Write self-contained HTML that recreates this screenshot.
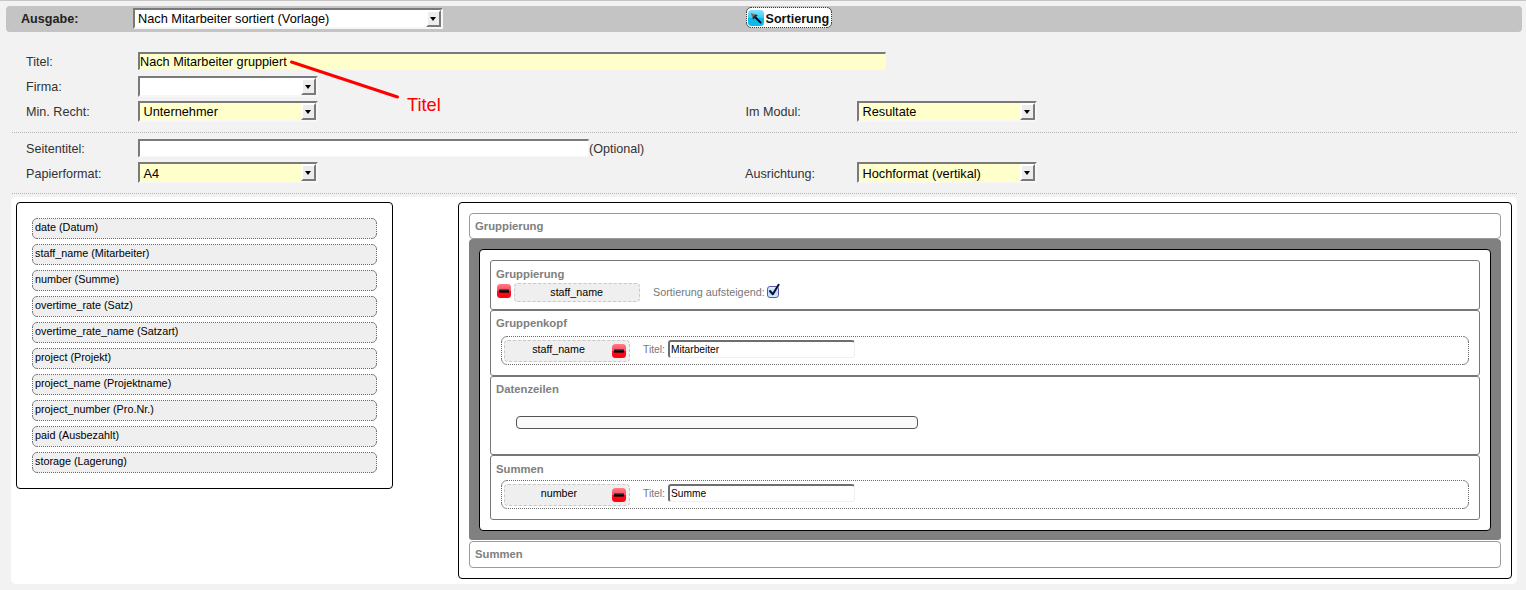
<!DOCTYPE html>
<html><head><meta charset="utf-8"><style>
html,body{margin:0;padding:0;width:1526px;height:590px;overflow:hidden;background:#f2f2f2;font-family:"Liberation Sans",sans-serif}
.a{position:absolute;box-sizing:content-box}
.t{position:absolute;line-height:1;white-space:nowrap}
.sel{border:2px solid;border-color:#7a7a7a #f7f7f7 #f7f7f7 #7a7a7a}
.inp{border-style:solid;border-width:2px 1px 1px 2px;border-color:#7a7a7a #f7f7f7 #f7f7f7 #7a7a7a}
.btn{background:#ededed;border:2px solid;border-color:#fff #7a7a7a #7a7a7a #fff}
.arr{width:0;height:0;border-left:3px solid transparent;border-right:3px solid transparent;border-top:4px solid #000}
</style></head><body>
<div class="a" style="left:0px;top:0px;width:1526px;height:1px;background:#c6c6c6"></div>
<div class="a" style="left:6px;top:6px;width:1516px;height:26px;background:#c4c4c4;border-radius:4px"></div>
<div class="t" style="left:21px;top:13.03px;font-size:12.6px;color:#222;font-weight:bold;">Ausgabe:</div>
<div class="a sel" style="left:133px;top:8px;width:306px;height:17px;background:#fff"></div>
<div class="a btn" style="left:426px;top:10px;width:11px;height:13px;"></div>
<div class="a arr" style="left:430px;top:17px;"></div>
<div class="t" style="left:138px;top:13.21px;font-size:12.75px;color:#000;">Nach Mitarbeiter sortiert (Vorlage)</div>
<svg class="a" style="left:746px;top:7px" width="86" height="21"><rect x="0.5" y="0.5" width="85" height="20" rx="4.5" fill="#fff"/><path d="M5.0 0.5H81.0M85.5 5.0V16.0M81.0 20.5H5.0M0.5 16.0V5.0" stroke="#3a3a3a" stroke-width="1" stroke-dasharray="1 1" fill="none"/><path d="M0.5 5.0A4.5 4.5 0 0 1 5.0 0.5M81.0 0.5A4.5 4.5 0 0 1 85.5 5.0M85.5 16.0A4.5 4.5 0 0 1 81.0 20.5M5.0 20.5A4.5 4.5 0 0 1 0.5 16.0" stroke="#555" stroke-width="1" fill="none"/></svg>
<svg class="a" style="left:748px;top:10px" width="16" height="16" viewBox="0 0 16 16">
<defs><linearGradient id="bl" x1="0" y1="0" x2="0" y2="1"><stop offset="0" stop-color="#86e3fb"/><stop offset="0.5" stop-color="#37c9f5"/><stop offset="0.52" stop-color="#08bbef"/><stop offset="1" stop-color="#11b9ea"/></linearGradient></defs>
<rect x="0" y="0" width="16" height="16" rx="3.5" fill="url(#bl)"/>
<path d="M12.6 12.6 L6.2 6.2" stroke="#000" stroke-width="1.9" stroke-linecap="round"/>
<path d="M2.7 2.9 L9.6 5.2 L5.2 9.6 Z" fill="#6e6e6e"/>
<path d="M4.5 7.8 L7.8 4.5 L9.6 5.2 L5.2 9.6 Z" fill="#222"/>
</svg>
<div class="t" style="left:765.5px;top:12.83px;font-size:12.6px;color:#111;font-weight:bold;">Sortierung</div>
<div class="t" style="left:26px;top:56.33px;font-size:12.6px;color:#333;">Titel:</div>
<div class="a inp" style="left:138px;top:52px;width:745px;height:15px;background:#ffffcc;"></div>
<div class="t" style="left:140px;top:55.75px;font-size:12.7px;color:#000;">Nach Mitarbeiter gruppiert</div>
<div class="t" style="left:26px;top:81.33px;font-size:12.6px;color:#333;">Firma:</div>
<div class="a sel" style="left:138px;top:76px;width:176px;height:17px;background:#fff"></div>
<div class="a btn" style="left:301px;top:78px;width:11px;height:13px;"></div>
<div class="a arr" style="left:305px;top:85px;"></div>
<div class="t" style="left:26px;top:105.83px;font-size:12.6px;color:#333;">Min. Recht:</div>
<div class="a sel" style="left:138px;top:101px;width:176px;height:17px;background:#ffffcc"></div>
<div class="a btn" style="left:301px;top:103px;width:11px;height:13px;"></div>
<div class="a arr" style="left:305px;top:110px;"></div>
<div class="t" style="left:143.5px;top:106.21px;font-size:12.75px;color:#000;">Unternehmer</div>
<div class="t" style="left:745.5px;top:106.33px;font-size:12.6px;color:#333;">Im Modul:</div>
<div class="a sel" style="left:857px;top:101px;width:176px;height:17px;background:#ffffcc"></div>
<div class="a btn" style="left:1020px;top:103px;width:11px;height:13px;"></div>
<div class="a arr" style="left:1024px;top:110px;"></div>
<div class="t" style="left:862.5px;top:106.21px;font-size:12.75px;color:#000;">Resultate</div>
<div class="a" style="left:12px;top:132px;width:1505px;height:1px;border-top:1px dotted #b5b5b5;height:0"></div>
<div class="t" style="left:26px;top:142.93px;font-size:12.6px;color:#333;">Seitentitel:</div>
<div class="a inp" style="left:138px;top:139px;width:448px;height:15px;background:#fff;"></div>
<div class="t" style="left:589px;top:142.93px;font-size:12.6px;color:#333;">(Optional)</div>
<div class="t" style="left:26px;top:168.03px;font-size:12.6px;color:#333;">Papierformat:</div>
<div class="a sel" style="left:138px;top:162px;width:176px;height:17px;background:#ffffcc"></div>
<div class="a btn" style="left:301px;top:164px;width:11px;height:13px;"></div>
<div class="a arr" style="left:305px;top:171px;"></div>
<div class="t" style="left:143.5px;top:167.71px;font-size:12.75px;color:#000;">A4</div>
<div class="t" style="left:745px;top:168.33px;font-size:12.6px;color:#333;">Ausrichtung:</div>
<div class="a sel" style="left:857px;top:162px;width:176px;height:17px;background:#ffffcc"></div>
<div class="a btn" style="left:1020px;top:164px;width:11px;height:13px;"></div>
<div class="a arr" style="left:1024px;top:171px;"></div>
<div class="t" style="left:862.5px;top:167.71px;font-size:12.75px;color:#000;">Hochformat (vertikal)</div>
<div class="a" style="left:12px;top:193px;width:1505px;height:1px;border-top:1px dotted #b5b5b5;height:0"></div>
<div class="a" style="left:11px;top:197px;width:1506px;height:387px;background:#fff;border-radius:5px"></div>
<div class="a" style="left:16px;top:202px;width:375px;height:285px;border:1px solid #000;border-radius:4px"></div>
<svg class="a" style="left:32px;top:218px" width="345" height="21"><rect x="0.5" y="0.5" width="344" height="20" rx="4.5" fill="#efefef"/><path d="M5.0 0.5H340.0M344.5 5.0V16.0M340.0 20.5H5.0M0.5 16.0V5.0" stroke="#6a6a6a" stroke-width="1" stroke-dasharray="1 1" fill="none"/><path d="M0.5 5.0A4.5 4.5 0 0 1 5.0 0.5M340.0 0.5A4.5 4.5 0 0 1 344.5 5.0M344.5 16.0A4.5 4.5 0 0 1 340.0 20.5M5.0 20.5A4.5 4.5 0 0 1 0.5 16.0" stroke="#888" stroke-width="1" fill="none"/></svg>
<div class="t" style="left:35px;top:222.36px;font-size:10.8px;color:#000;">date (Datum)</div>
<svg class="a" style="left:32px;top:244px" width="345" height="21"><rect x="0.5" y="0.5" width="344" height="20" rx="4.5" fill="#efefef"/><path d="M5.0 0.5H340.0M344.5 5.0V16.0M340.0 20.5H5.0M0.5 16.0V5.0" stroke="#6a6a6a" stroke-width="1" stroke-dasharray="1 1" fill="none"/><path d="M0.5 5.0A4.5 4.5 0 0 1 5.0 0.5M340.0 0.5A4.5 4.5 0 0 1 344.5 5.0M344.5 16.0A4.5 4.5 0 0 1 340.0 20.5M5.0 20.5A4.5 4.5 0 0 1 0.5 16.0" stroke="#888" stroke-width="1" fill="none"/></svg>
<div class="t" style="left:35px;top:248.36px;font-size:10.8px;color:#000;">staff_name (Mitarbeiter)</div>
<svg class="a" style="left:32px;top:270px" width="345" height="21"><rect x="0.5" y="0.5" width="344" height="20" rx="4.5" fill="#efefef"/><path d="M5.0 0.5H340.0M344.5 5.0V16.0M340.0 20.5H5.0M0.5 16.0V5.0" stroke="#6a6a6a" stroke-width="1" stroke-dasharray="1 1" fill="none"/><path d="M0.5 5.0A4.5 4.5 0 0 1 5.0 0.5M340.0 0.5A4.5 4.5 0 0 1 344.5 5.0M344.5 16.0A4.5 4.5 0 0 1 340.0 20.5M5.0 20.5A4.5 4.5 0 0 1 0.5 16.0" stroke="#888" stroke-width="1" fill="none"/></svg>
<div class="t" style="left:35px;top:274.36px;font-size:10.8px;color:#000;">number (Summe)</div>
<svg class="a" style="left:32px;top:296px" width="345" height="21"><rect x="0.5" y="0.5" width="344" height="20" rx="4.5" fill="#efefef"/><path d="M5.0 0.5H340.0M344.5 5.0V16.0M340.0 20.5H5.0M0.5 16.0V5.0" stroke="#6a6a6a" stroke-width="1" stroke-dasharray="1 1" fill="none"/><path d="M0.5 5.0A4.5 4.5 0 0 1 5.0 0.5M340.0 0.5A4.5 4.5 0 0 1 344.5 5.0M344.5 16.0A4.5 4.5 0 0 1 340.0 20.5M5.0 20.5A4.5 4.5 0 0 1 0.5 16.0" stroke="#888" stroke-width="1" fill="none"/></svg>
<div class="t" style="left:35px;top:300.36px;font-size:10.8px;color:#000;">overtime_rate (Satz)</div>
<svg class="a" style="left:32px;top:322px" width="345" height="21"><rect x="0.5" y="0.5" width="344" height="20" rx="4.5" fill="#efefef"/><path d="M5.0 0.5H340.0M344.5 5.0V16.0M340.0 20.5H5.0M0.5 16.0V5.0" stroke="#6a6a6a" stroke-width="1" stroke-dasharray="1 1" fill="none"/><path d="M0.5 5.0A4.5 4.5 0 0 1 5.0 0.5M340.0 0.5A4.5 4.5 0 0 1 344.5 5.0M344.5 16.0A4.5 4.5 0 0 1 340.0 20.5M5.0 20.5A4.5 4.5 0 0 1 0.5 16.0" stroke="#888" stroke-width="1" fill="none"/></svg>
<div class="t" style="left:35px;top:326.36px;font-size:10.8px;color:#000;">overtime_rate_name (Satzart)</div>
<svg class="a" style="left:32px;top:348px" width="345" height="21"><rect x="0.5" y="0.5" width="344" height="20" rx="4.5" fill="#efefef"/><path d="M5.0 0.5H340.0M344.5 5.0V16.0M340.0 20.5H5.0M0.5 16.0V5.0" stroke="#6a6a6a" stroke-width="1" stroke-dasharray="1 1" fill="none"/><path d="M0.5 5.0A4.5 4.5 0 0 1 5.0 0.5M340.0 0.5A4.5 4.5 0 0 1 344.5 5.0M344.5 16.0A4.5 4.5 0 0 1 340.0 20.5M5.0 20.5A4.5 4.5 0 0 1 0.5 16.0" stroke="#888" stroke-width="1" fill="none"/></svg>
<div class="t" style="left:35px;top:352.36px;font-size:10.8px;color:#000;">project (Projekt)</div>
<svg class="a" style="left:32px;top:374px" width="345" height="21"><rect x="0.5" y="0.5" width="344" height="20" rx="4.5" fill="#efefef"/><path d="M5.0 0.5H340.0M344.5 5.0V16.0M340.0 20.5H5.0M0.5 16.0V5.0" stroke="#6a6a6a" stroke-width="1" stroke-dasharray="1 1" fill="none"/><path d="M0.5 5.0A4.5 4.5 0 0 1 5.0 0.5M340.0 0.5A4.5 4.5 0 0 1 344.5 5.0M344.5 16.0A4.5 4.5 0 0 1 340.0 20.5M5.0 20.5A4.5 4.5 0 0 1 0.5 16.0" stroke="#888" stroke-width="1" fill="none"/></svg>
<div class="t" style="left:35px;top:378.36px;font-size:10.8px;color:#000;">project_name (Projektname)</div>
<svg class="a" style="left:32px;top:400px" width="345" height="21"><rect x="0.5" y="0.5" width="344" height="20" rx="4.5" fill="#efefef"/><path d="M5.0 0.5H340.0M344.5 5.0V16.0M340.0 20.5H5.0M0.5 16.0V5.0" stroke="#6a6a6a" stroke-width="1" stroke-dasharray="1 1" fill="none"/><path d="M0.5 5.0A4.5 4.5 0 0 1 5.0 0.5M340.0 0.5A4.5 4.5 0 0 1 344.5 5.0M344.5 16.0A4.5 4.5 0 0 1 340.0 20.5M5.0 20.5A4.5 4.5 0 0 1 0.5 16.0" stroke="#888" stroke-width="1" fill="none"/></svg>
<div class="t" style="left:35px;top:404.36px;font-size:10.8px;color:#000;">project_number (Pro.Nr.)</div>
<svg class="a" style="left:32px;top:426px" width="345" height="21"><rect x="0.5" y="0.5" width="344" height="20" rx="4.5" fill="#efefef"/><path d="M5.0 0.5H340.0M344.5 5.0V16.0M340.0 20.5H5.0M0.5 16.0V5.0" stroke="#6a6a6a" stroke-width="1" stroke-dasharray="1 1" fill="none"/><path d="M0.5 5.0A4.5 4.5 0 0 1 5.0 0.5M340.0 0.5A4.5 4.5 0 0 1 344.5 5.0M344.5 16.0A4.5 4.5 0 0 1 340.0 20.5M5.0 20.5A4.5 4.5 0 0 1 0.5 16.0" stroke="#888" stroke-width="1" fill="none"/></svg>
<div class="t" style="left:35px;top:430.36px;font-size:10.8px;color:#000;">paid (Ausbezahlt)</div>
<svg class="a" style="left:32px;top:452px" width="345" height="21"><rect x="0.5" y="0.5" width="344" height="20" rx="4.5" fill="#efefef"/><path d="M5.0 0.5H340.0M344.5 5.0V16.0M340.0 20.5H5.0M0.5 16.0V5.0" stroke="#6a6a6a" stroke-width="1" stroke-dasharray="1 1" fill="none"/><path d="M0.5 5.0A4.5 4.5 0 0 1 5.0 0.5M340.0 0.5A4.5 4.5 0 0 1 344.5 5.0M344.5 16.0A4.5 4.5 0 0 1 340.0 20.5M5.0 20.5A4.5 4.5 0 0 1 0.5 16.0" stroke="#888" stroke-width="1" fill="none"/></svg>
<div class="t" style="left:35px;top:456.36px;font-size:10.8px;color:#000;">storage (Lagerung)</div>
<div class="a" style="left:458px;top:202px;width:1052px;height:375px;border:1px solid #000;border-radius:4px"></div>
<div class="a" style="left:469px;top:213px;width:1030px;height:24px;border:1px solid #9a9a9a;border-radius:4px"></div>
<div class="t" style="left:475px;top:220.93px;font-size:11.3px;color:#808080;font-weight:bold;">Gruppierung</div>
<div class="a" style="left:469px;top:239px;width:1032px;height:301px;background:#808080;border-radius:4px 4px 3px 3px"></div>
<div class="a" style="left:479px;top:249px;width:1010px;height:280px;background:#fff;border:1px solid #000;border-radius:4px"></div>
<div class="a" style="left:490px;top:260px;width:988px;height:48px;border:1px solid #777;border-radius:3px"></div>
<div class="t" style="left:496px;top:269.23px;font-size:11.3px;color:#808080;font-weight:bold;">Gruppierung</div>
<svg class="a" style="left:497px;top:284px" width="14" height="14" viewBox="0 0 14 14">
<defs><linearGradient id="rd497284" x1="0" y1="0" x2="0" y2="1"><stop offset="0" stop-color="#ff7c86"/><stop offset="0.48" stop-color="#ff4a58"/><stop offset="0.5" stop-color="#ff0a1e"/><stop offset="1" stop-color="#ff0012"/></linearGradient></defs>
<rect x="0" y="0" width="14" height="14" rx="3.5" fill="url(#rd497284)"/>
<defs><linearGradient id="bar497284" x1="0" y1="0" x2="0" y2="1"><stop offset="0" stop-color="#3a4a50"/><stop offset="0.6" stop-color="#0a0a0a"/><stop offset="1" stop-color="#000"/></linearGradient></defs><rect x="2" y="5.2" width="10" height="3.4" fill="url(#bar497284)"/>
</svg>
<div class="a" style="left:514px;top:283px;width:124px;height:17px;background:#efefef;border:1px dashed #c8c8c8;border-radius:4px"></div>
<div class="t" style="left:550.3px;top:286.94px;font-size:10.7px;color:#000;">staff_name</div>
<div class="t" style="left:653px;top:286.86px;font-size:10.8px;color:#777;">Sortierung aufsteigend:</div>
<svg class="a" style="left:766px;top:283px" width="14" height="16" viewBox="0 0 14 16">
<defs><linearGradient id="cb" x1="0" y1="0" x2="0" y2="1"><stop offset="0" stop-color="#e6f3ff"/><stop offset="0.5" stop-color="#b9dcff"/><stop offset="1" stop-color="#d8ecff"/></linearGradient></defs>
<rect x="1.5" y="3.5" width="11" height="11" rx="2.5" fill="url(#cb)" stroke="#5a56a8" stroke-width="1"/>
<path d="M4 8 L6.8 11.2 L12.6 1.8" stroke="#0c1633" stroke-width="2.1" fill="none" stroke-linecap="round" stroke-linejoin="round"/>
</svg>
<div class="a" style="left:490px;top:310px;width:988px;height:64px;border:1px solid #777;border-radius:3px"></div>
<div class="t" style="left:496px;top:318.23px;font-size:11.3px;color:#808080;font-weight:bold;">Gruppenkopf</div>
<svg class="a" style="left:501px;top:336px" width="968" height="29"><path d="M6.0 0.5H962.0M967.5 6.0V23.0M962.0 28.5H6.0M0.5 23.0V6.0" stroke="#6a6a6a" stroke-width="1" stroke-dasharray="1 1" fill="none"/><path d="M0.5 6.0A5.5 5.5 0 0 1 6.0 0.5M962.0 0.5A5.5 5.5 0 0 1 967.5 6.0M967.5 23.0A5.5 5.5 0 0 1 962.0 28.5M6.0 28.5A5.5 5.5 0 0 1 0.5 23.0" stroke="#888" stroke-width="1" fill="none"/></svg>
<div class="a" style="left:504px;top:340px;width:124px;height:20px;background:#efefef;border:1px dashed #c8c8c8;border-radius:4px"></div>
<div class="t" style="left:532.2px;top:344.44px;font-size:10.7px;color:#000;">staff_name</div>
<svg class="a" style="left:612px;top:344px" width="14" height="14" viewBox="0 0 14 14">
<defs><linearGradient id="rd612344" x1="0" y1="0" x2="0" y2="1"><stop offset="0" stop-color="#ff7c86"/><stop offset="0.48" stop-color="#ff4a58"/><stop offset="0.5" stop-color="#ff0a1e"/><stop offset="1" stop-color="#ff0012"/></linearGradient></defs>
<rect x="0" y="0" width="14" height="14" rx="3.5" fill="url(#rd612344)"/>
<defs><linearGradient id="bar612344" x1="0" y1="0" x2="0" y2="1"><stop offset="0" stop-color="#3a4a50"/><stop offset="0.6" stop-color="#0a0a0a"/><stop offset="1" stop-color="#000"/></linearGradient></defs><rect x="2" y="5.2" width="10" height="3.4" fill="url(#bar612344)"/>
</svg>
<div class="t" style="left:643px;top:344.78px;font-size:10.3px;color:#777;">Titel:</div>
<div class="a inp" style="left:668px;top:340px;width:184px;height:15px;background:#fff;border-radius:3px;border-color:#6e6e6e #f0f0f0 #f0f0f0 #6e6e6e"></div>
<div class="t" style="left:671px;top:345.17px;font-size:10.2px;color:#000;">Mitarbeiter</div>
<div class="a" style="left:490px;top:376px;width:988px;height:77px;border:1px solid #777;border-radius:3px"></div>
<div class="t" style="left:496px;top:384.23px;font-size:11.3px;color:#808080;font-weight:bold;">Datenzeilen</div>
<div class="a" style="left:516px;top:416px;width:400px;height:11px;background:#f9f9f9;border:1px solid #555;border-radius:4px"></div>
<div class="a" style="left:490px;top:455px;width:988px;height:63px;border:1px solid #777;border-radius:3px"></div>
<div class="t" style="left:496px;top:463.53px;font-size:11.3px;color:#808080;font-weight:bold;">Summen</div>
<svg class="a" style="left:501px;top:480px" width="968" height="29"><path d="M6.0 0.5H962.0M967.5 6.0V23.0M962.0 28.5H6.0M0.5 23.0V6.0" stroke="#6a6a6a" stroke-width="1" stroke-dasharray="1 1" fill="none"/><path d="M0.5 6.0A5.5 5.5 0 0 1 6.0 0.5M962.0 0.5A5.5 5.5 0 0 1 967.5 6.0M967.5 23.0A5.5 5.5 0 0 1 962.0 28.5M6.0 28.5A5.5 5.5 0 0 1 0.5 23.0" stroke="#888" stroke-width="1" fill="none"/></svg>
<div class="a" style="left:504px;top:484px;width:124px;height:20px;background:#efefef;border:1px dashed #c8c8c8;border-radius:4px"></div>
<div class="t" style="left:540.8px;top:488.44px;font-size:10.7px;color:#000;">number</div>
<svg class="a" style="left:612px;top:488px" width="14" height="14" viewBox="0 0 14 14">
<defs><linearGradient id="rd612488" x1="0" y1="0" x2="0" y2="1"><stop offset="0" stop-color="#ff7c86"/><stop offset="0.48" stop-color="#ff4a58"/><stop offset="0.5" stop-color="#ff0a1e"/><stop offset="1" stop-color="#ff0012"/></linearGradient></defs>
<rect x="0" y="0" width="14" height="14" rx="3.5" fill="url(#rd612488)"/>
<defs><linearGradient id="bar612488" x1="0" y1="0" x2="0" y2="1"><stop offset="0" stop-color="#3a4a50"/><stop offset="0.6" stop-color="#0a0a0a"/><stop offset="1" stop-color="#000"/></linearGradient></defs><rect x="2" y="5.2" width="10" height="3.4" fill="url(#bar612488)"/>
</svg>
<div class="t" style="left:643px;top:488.78px;font-size:10.3px;color:#777;">Titel:</div>
<div class="a inp" style="left:668px;top:484px;width:184px;height:15px;background:#fff;border-radius:3px;border-color:#6e6e6e #f0f0f0 #f0f0f0 #6e6e6e"></div>
<div class="t" style="left:671px;top:489.17px;font-size:10.2px;color:#000;">Summe</div>
<div class="a" style="left:469px;top:541px;width:1030px;height:25px;border:1px solid #9a9a9a;border-radius:4px"></div>
<div class="t" style="left:475px;top:548.93px;font-size:11.3px;color:#808080;font-weight:bold;">Summen</div>
<svg class="a" style="left:0;top:0" width="1526" height="590"><line x1="291.5" y1="62" x2="397.5" y2="97" stroke="#ff0000" stroke-width="3" stroke-linecap="round"/></svg>
<div class="t" style="left:407px;top:96.29px;font-size:18.2px;color:#ff0000;">Titel</div>
</body></html>
